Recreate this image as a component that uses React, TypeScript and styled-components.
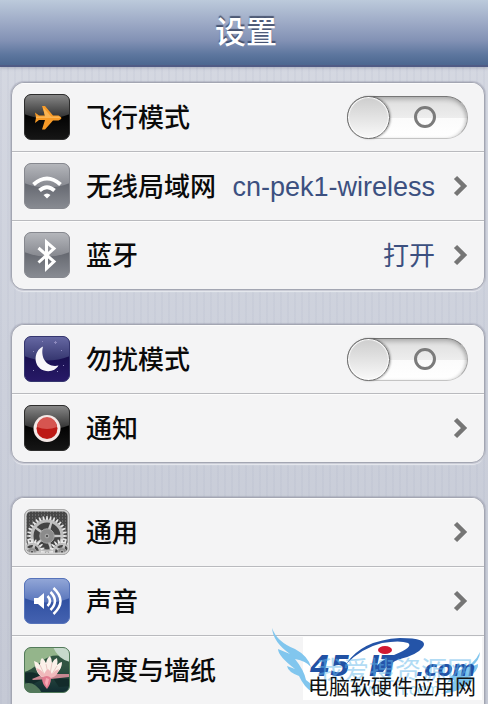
import React from "react";
import styled, { createGlobalStyle, css } from "styled-components";

const GlobalStyle = createGlobalStyle`
  *, *::before, *::after { box-sizing: border-box; }
  body {
    margin: 0;
    font-family: "Liberation Sans", "Noto Sans CJK SC", sans-serif;
    color: #0a0a0a;
  }
`;

const Page = styled.div`
  height: 100vh;
  overflow: hidden;
  background:
    repeating-linear-gradient(90deg, rgba(110, 120, 155, 0.05) 0 2px, transparent 2px 7px),
    linear-gradient(#d6d9e2, #cdd1dc 50%, #c5c9d5);
`;

const Header = styled.header`
  display: flex;
  align-items: center;
  justify-content: center;
  height: 67px;
  background: linear-gradient(#bccadb, #9daac6 35%, #8392b5 62%, #5d769e 84%, #4c6790);
  border-bottom: 2px solid #505b85;
  box-shadow: 0 1px 3px rgba(90, 95, 120, 0.35);
`;

const Title = styled.h1`
  margin: 0 0 0 4px;
  font-size: 31px;
  line-height: 40px;
  font-weight: 500;
  color: #fff;
  text-shadow: 0 -2px 1px rgba(45, 58, 85, 0.75);
`;

const Content = styled.main`
  display: flex;
  flex-direction: column;
  gap: 34px;
  padding: 15px 3px 0 11px;
`;

const Card = styled.section<{ $continues?: boolean }>`
  flex: none;
  overflow: hidden;
  background: #f4f4f5;
  border: 1px solid #a3a6b2;
  border-radius: ${(p) => (p.$continues ? "13px 13px 0 0" : "13px")};
  box-shadow: 0 0 1px 1px rgba(150, 154, 170, 0.45), 0 2px 1px #eceef3;
`;

const rowStyle = css`
  display: flex;
  align-items: center;
  height: 69px;
  padding: 0 16px 0 12px;
  border-bottom: 1px solid #b9babe;
  box-shadow: inset 0 1px 0 #fcfcfc;
  color: inherit;
  text-decoration: none;
  &:last-child {
    height: 68px;
    border-bottom: 0;
  }
`;

const LinkRow = styled.a`${rowStyle}`;
const ToggleRow = styled.label`${rowStyle}`;

const Label = styled.span`
  flex: 1;
  margin-left: 16px;
  padding-top: 1px;
  font-size: 26px;
  line-height: 36px;
  font-weight: 500;
  white-space: nowrap;
`;

const Value = styled.span<{ $latin?: boolean }>`
  margin-right: 18px;
  padding-top: 1px;
  font-size: ${(p) => (p.$latin ? 27 : 26)}px;
  line-height: 36px;
  color: #3c5080;
  white-space: nowrap;
`;

const Switch = styled.input`
  appearance: none;
  display: flex;
  align-items: center;
  flex: none;
  width: 121px;
  height: 43px;
  margin: 0;
  border: 1px solid #a4a4a4;
  border-top-color: #777;
  border-bottom-color: #c4c4c4;
  border-radius: 22px;
  background: linear-gradient(#dedede, #ededed 50%, #fbfbfb 51%, #fff);
  box-shadow: inset 0 3px 4px rgba(0, 0, 0, 0.18), inset -2px 0 3px rgba(0, 0, 0, 0.1);
  &::before {
    content: "";
    width: 43px;
    height: 43px;
    margin: 0 -1px;
    border: 1px solid #707070;
    border-radius: 50%;
    background: linear-gradient(#cdcdcd, #f9f9f9);
    box-shadow: inset 0 0 1px 1px #fff, 1px 0 2px rgba(0, 0, 0, 0.3);
  }
  &::after {
    content: "";
    width: 22px;
    height: 22px;
    margin: 0 25px;
    border: 3px solid #7b7b7b;
    border-radius: 50%;
  }
  &:checked {
    flex-direction: row-reverse;
  }
`;

const IconSvg = styled.svg`
  flex: none;
  width: 46px;
  height: 46px;
`;

const ChevronSvg = styled.svg`
  flex: none;
  width: 15px;
  height: 22px;
`;

const Watermark = styled.aside`
  position: fixed;
  right: 6px;
  bottom: 4px;
  width: 212px;
  height: 72px;
`;

const WatermarkArt = styled.svg`
  display: block;
  width: 100%;
  height: 100%;
  font-family: "Liberation Sans", "Noto Sans CJK SC", sans-serif;
`;

type Tone = "black" | "gray" | "violet" | "blue" | "steel" | "photo";

const tones: Record<Tone, [string, string, string, string]> = {
  black: ["#8b8b8b", "#2d2d2d", "#000000", "#161616"],
  gray: ["#b6b8bd", "#86888f", "#62656d", "#898c93"],
  violet: ["#686aa5", "#35366f", "#180f4f", "#281a68"],
  blue: ["#94a8d8", "#5673ba", "#2e4e9f", "#4563b1"],
  steel: ["#6f6f6f", "#555555", "#464646", "#5b5b5b"],
  photo: ["#b5d0b3", "#537b5b", "#315542", "#102b31"],
};

function Tile({ tone, children }: { tone: Tone; children: React.ReactNode }) {
  const [top, upper, lower, bottom] = tones[tone];
  const glossy = tone !== "steel" && tone !== "photo";
  return (
    <IconSvg viewBox="0 0 46 46" aria-hidden="true">
      <defs>
        <linearGradient id={`upper-${tone}`} x1="0" y1="0" x2="0" y2="1">
          <stop offset="0" stopColor={top} />
          <stop offset="1" stopColor={upper} />
        </linearGradient>
        <linearGradient id={`lower-${tone}`} x1="0" y1="0" x2="0" y2="1">
          <stop offset="0.4" stopColor={lower} />
          <stop offset="1" stopColor={bottom} />
        </linearGradient>
        <clipPath id={`clip-${tone}`}>
          <rect x="0.5" y="0.5" width="45" height="45" rx="6.5" />
        </clipPath>
      </defs>
      <g clipPath={`url(#clip-${tone})`}>
        <rect width="46" height="46" fill={`url(#lower-${tone})`} />
        {glossy && <path d="M0 0H46V20Q23 29 0 20Z" fill={`url(#upper-${tone})`} />}
        {children}
      </g>
      <rect x="0.5" y="0.5" width="45" height="45" rx="6.5" fill="none" stroke={tone === "steel" ? "#aaa" : upper} strokeWidth="1" />
    </IconSvg>
  );
}

const PlaneIcon = () => (
  <Tile tone="black">
    <path
      d="M11 18.500l4 3H21L18 12h3l8 9.500h5.500q3 1.500 3 2.500t-3 2.500H29L21 35.500h-3L21 26h-6l-4 3 1-5.300z"
      fill="#f79a27"
    />
    <path d="M12 22.500H21L19 13l8 9.500h8q1.500.5 1.500 1.500H12z" fill="#fbb452" />
  </Tile>
);

const WifiIcon = () => (
  <Tile tone="gray">
    <g fill="none" stroke="#fff" strokeWidth="4">
      <path d="M9.500 21.500Q23 9.500 36.500 21.500" />
      <path d="M15.500 27.500Q23 21 30.500 27.500" />
    </g>
    <path d="M19.500 32Q23 29 26.500 32L23 35.500z" fill="#fff" />
  </Tile>
);

const BluetoothIcon = () => (
  <Tile tone="gray">
    <path d="M14.500 16L30 29.500 22.500 36.500V10L30 16.500 14.500 30.500" fill="none" stroke="#fff" strokeWidth="3" />
  </Tile>
);

const MoonIcon = () => (
  <Tile tone="violet">
    <path d="M19 10.500C9 15 9 31 20 34.500c6 2 12-.5 14.500-5C23 32 16 22 19 10.500Z" fill="#f8f6fa" />
    <path d="M30 6.500h3M31.500 5v3M37 14.500h1M9 34.500h1M33 35.500h1M18 5.500h1M9 15.500h1M39 29.500h1" stroke="#8d89bd" strokeWidth="1" />
  </Tile>
);

const RecordIcon = () => (
  <Tile tone="black">
    <circle cx="23" cy="23.500" r="13.500" fill="#f3e7e5" />
    <circle cx="23" cy="23.500" r="10.500" fill="#bd1915" />
    <path d="M13 22a10 10 0 0 1 20 0Q23 26 13 22Z" fill="#d65550" />
  </Tile>
);

const spin = (count: number) => Array.from({ length: count }, (_, i) => (360 / count) * i);

function Gear({ cx, cy, r, teeth, rim }: { cx: number; cy: number; r: number; teeth: number; rim: number }) {
  return (
    <g transform={`translate(${cx} ${cy})`}>
      {spin(teeth).map((a) => (
        <path key={a} d={`M-1.200 ${-r}L-.6 ${-r - 4}H.6L1.200 ${-r}z`} fill="#e8e8e8" transform={`rotate(${a})`} />
      ))}
      <circle r={r - 1} fill="#444" stroke="#bdbdbd" strokeWidth={rim} />
      {spin(5).map((a) => (
        <path key={a} d={`M-1.500 0L-1 ${-r}H1L1.500 0z`} fill="#c4c4c4" transform={`rotate(${a + 18})`} />
      ))}
      <circle r={r * 0.45} fill="#8b8b8b" stroke="#a5a5a5" />
      <circle r="1.800" fill="#555" stroke="#ccc" strokeWidth="0.700" />
    </g>
  );
}

const GearIcon = () => (
  <Tile tone="steel">
    {spin(12).map((a, i) => (
      <path key={a} d={`M2 ${3 + i * 3}H44`} stroke="#858585" strokeWidth="1" strokeDasharray="1 2" />
    ))}
    <Gear cx={23} cy={27} r={16} teeth={32} rim={3} />
    <Gear cx={8} cy={43} r={9} teeth={20} rim={2} />
    <Gear cx={38} cy={43} r={9} teeth={20} rim={2} />
    <rect x="1.500" y="1.500" width="43" height="43" rx="5.500" fill="none" stroke="#d2d2d2" strokeWidth="2" />
  </Tile>
);

const SoundIcon = () => (
  <Tile tone="blue">
    <path d="M10 20h4l6-5v16l-6-5h-4z" fill="#fff" />
    <g fill="none" stroke="#fff" strokeWidth="2.500">
      <path d="M23.500 18q5 5 0 10" />
      <path d="M26.500 14q9 9 0 18" />
      <path d="M29.500 10q14 13 0 26" />
    </g>
  </Tile>
);

const LotusIcon = () => (
  <Tile tone="photo">
    <path d="M0 0H46V12Q30 4 18 14T0 25z" fill="#94b58b" />
    <path d="M29 0h17v15q-12-3-17-15z" fill="#c7d9cc" />
    <path d="M0 26q10-3 21 5L7 38 0 34zM46 32l-17-1 6 9 11-1z" fill="#132b2a" />
    <path d="M0 37q10-4 18 9H0z" fill="#53785b" />
    <path d="M8 32l12-5h25v3l-18 2-18 1z" fill="#c98791" />
    <path d="M10 14q4 1 6 4 0-5 2-7 3 2 4 5 1-5 4-7 2 3 2 7 2-4 5-5 1 4 0 7 3-3 5-3 0 6-4 10l-6 5H18q-6-3-8-16Z" fill="#fbf1e9" />
    <path d="M16 18l4 9M22 17l2 10M28 16l-2 11M33 19l-5 8" stroke="#e9c9c4" strokeWidth="1" />
    <path d="M12 21q5 1 8 6 2-4 4-5 3 2 4 5 3-4 7-5-1 7-8 9h-7q-6-3-8-10Z" fill="#f0b9bb" />
    <path d="M18 31q5-4 9 0 0 6-4 11-5-5-5-11Z" fill="#e27c90" />
    <path d="M22 31l3 1-2 8-2-4z" fill="#f4aab4" />
  </Tile>
);

const Chevron = () => (
  <ChevronSvg viewBox="0 0 15 22" aria-hidden="true">
    <path d="M2.500 2.500L11 11 2.500 19.500" fill="none" stroke="#757575" strokeWidth="4.500" />
  </ChevronSvg>
);

type Item = { label: string; icon: React.ReactNode; value?: string; latin?: boolean; toggle?: boolean };
type Group = { items: Item[]; continues?: boolean };

const groups: Group[] = [
  {
    items: [
      { label: "飞行模式", icon: <PlaneIcon />, toggle: true },
      { label: "无线局域网", icon: <WifiIcon />, value: "cn-pek1-wireless", latin: true },
      { label: "蓝牙", icon: <BluetoothIcon />, value: "打开" },
    ],
  },
  {
    items: [
      { label: "勿扰模式", icon: <MoonIcon />, toggle: true },
      { label: "通知", icon: <RecordIcon /> },
    ],
  },
  {
    continues: true,
    items: [
      { label: "通用", icon: <GearIcon /> },
      { label: "声音", icon: <SoundIcon /> },
      { label: "亮度与墙纸", icon: <LotusIcon /> },
    ],
  },
];

function SettingRow({ item }: { item: Item }) {
  if (item.toggle) {
    return (
      <ToggleRow>
        {item.icon}
        <Label>{item.label}</Label>
        <Switch type="checkbox" role="switch" />
      </ToggleRow>
    );
  }
  return (
    <LinkRow href="#">
      {item.icon}
      <Label>{item.label}</Label>
      {item.value && <Value $latin={item.latin}>{item.value}</Value>}
      <Chevron />
    </LinkRow>
  );
}

function SiteMark() {
  return (
    <Watermark>
      <WatermarkArt viewBox="0 0 212 72" role="img" aria-label="45IT.com 电脑软硬件应用网">
        <rect x="33" y="9" width="179" height="63" fill="#fff" />
        <path
          d="M2 0Q7 14 25 21 38 28 41 39 36 33 25 31 34 42 36 52 44 57 42 64 34 59 29 48 18 44 17 38L25 41Q8 28 8 21L20 26Q3 14 2 0ZM210 24Q204 37 190 42 181 46 177 55L184 52Q180 63 171 66 202 61 203 50L198 50Q209 42 208 36L201 39Q210 32 210 24Z"
          fill="#81c6ee"
        />
        <g fontFamily="DejaVu Sans" fontWeight="700" fontStyle="italic" fill="#2151a4">
          <text x="40" y="48" fontSize="29">45</text>
          <text x="99" y="48" fontSize="29">IT</text>
          <text x="146" y="48" fontSize="22">.com</text>
        </g>
        <path
          d="M76 36Q92 12 130 10 159 10 153 19 147 27 130 31 118 35 113 44L103 44Q107 33 124 27 144 19 138 15 130 12 112 15 92 20 76 36Z"
          fill="#2454a8"
        />
        <ellipse cx="115" cy="22" rx="7" ry="4" fill="#d01831" />
        <text x="47" y="52" fontSize="26" fill="#65b8eb" opacity="0.5">我爱搜资源网</text>
        <text x="83" y="67" fontSize="16" fill="#a7dcf5">www.  n.com</text>
        <text x="38" y="66" fontSize="21" fill="#111">电脑软硬件应用网</text>
      </WatermarkArt>
    </Watermark>
  );
}

export default function App() {
  return (
    <Page>
      <GlobalStyle />
      <Header>
        <Title>设置</Title>
      </Header>
      <Content>
        {groups.map((group, g) => (
          <Card key={g} $continues={group.continues}>
            {group.items.map((item) => (
              <SettingRow key={item.label} item={item} />
            ))}
          </Card>
        ))}
      </Content>
      <SiteMark />
    </Page>
  );
}
